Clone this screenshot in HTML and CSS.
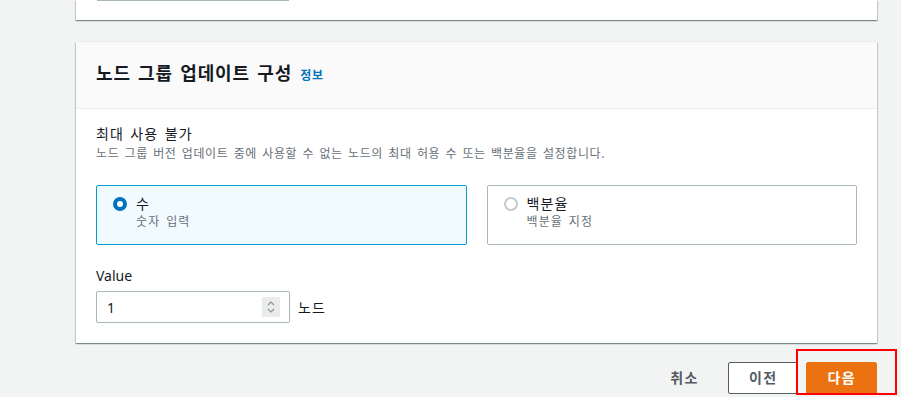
FILE: index.html
```html
<!DOCTYPE html>
<html lang="ko">
<head>
    <meta charset="UTF-8">
    <meta name="viewport" content="width=device-width, initial-scale=1.0">
    <title>노드 그룹 업데이트 구성</title>
    <link rel="stylesheet" href="styles.css">
</head>
<body>
    <div class="page">
        <!-- 이전 섹션 (잘림) -->
        <div class="card card-prev">
            <div class="prev-field"></div>
        </div>

        <!-- 노드 그룹 업데이트 구성 -->
        <div class="card">
            <div class="card-header">
                <h2>노드 그룹 업데이트 구성 <a href="#" class="info">정보</a></h2>
            </div>
            <div class="card-body">
                <div class="field-label">최대 사용 불가</div>
                <div class="field-desc">노드 그룹 버전 업데이트 중에 사용할 수 없는 노드의 최대 허용 수 또는 백분율을 설정합니다.</div>

                <div class="tiles">
                    <label class="tile selected">
                        <span class="radio checked"></span>
                        <span class="tile-text">
                            <span class="tile-title">수</span>
                            <span class="tile-desc">숫자 입력</span>
                        </span>
                    </label>
                    <label class="tile">
                        <span class="radio"></span>
                        <span class="tile-text">
                            <span class="tile-title">백분율</span>
                            <span class="tile-desc">백분율 지정</span>
                        </span>
                    </label>
                </div>

                <div class="value-label">Value</div>
                <div class="value-row">
                    <div class="number-input">
                        <span class="number-value">1</span>
                        <span class="spinner">
                            <svg width="18" height="20" viewBox="0 0 18 20">
                                <path d="M6 8 L9 5 L12 8" fill="none" stroke="#879596" stroke-width="1.2"/>
                                <path d="M6 12 L9 15 L12 12" fill="none" stroke="#879596" stroke-width="1.2"/>
                            </svg>
                        </span>
                    </div>
                    <span class="unit">노드</span>
                </div>
            </div>
        </div>

        <div class="footer">
            <button class="btn btn-link">취소</button>
            <button class="btn btn-normal">이전</button>
            <button class="btn btn-primary">다음</button>
        </div>
    </div>

    <div class="highlight"></div>
</body>
</html>
```

FILE: styles.css
```css
body {
    font-family: 'Noto Sans', 'Noto Sans CJK KR', sans-serif;
    margin: 0;
    background-color: #f2f3f3;
    color: #16191f;
    height: 397px;
    overflow: hidden;
    letter-spacing: 0.07em;
    word-spacing: 0.1em;
}

.page {
    padding: 0 24px 0 76px;
}

.card {
    background: white;
    box-shadow: 0 1px 1px 0 rgba(0,28,36,0.3), 1px 1px 1px 0 rgba(0,28,36,0.15), -1px 1px 1px 0 rgba(0,28,36,0.15), 0 -1px 0 0 #eaeded;
    margin-top: 22px;
}

.card-prev {
    margin-top: 0;
    height: 20px;
}

.prev-field {
    margin-left: 21px;
    width: 192px;
    height: 1px;
    background-color: #aab7b8;
}

.card-header {
    background-color: #fafafa;
    border-bottom: 1px solid #eaeded;
    padding: 19px 20px 23px;
}

h2 {
    display: flex;
    align-items: baseline;
    gap: 8px;
    margin: 0;
    font-size: 18px;
    line-height: 24px;
    font-weight: 700;
    letter-spacing: 0.05em;
}

.info {
    font-size: 12px;
    line-height: 16px;
    font-weight: 700;
    color: #0073bb;
    text-decoration: none;
}

.card-body {
    padding: 14px 20px 20px;
}

.field-label {
    font-size: 14px;
    line-height: 22px;
}

.field-desc {
    margin-top: 1px;
    font-size: 12px;
    line-height: 16px;
    color: #687078;
    letter-spacing: 0.05em;
}

.tiles {
    display: grid;
    grid-template-columns: 1fr 1fr;
    gap: 20px;
    margin-top: 23px;
}

.tile {
    display: flex;
    gap: 9px;
    padding: 8px 16px 14px;
    border: 1px solid #aab7b8;
    border-radius: 2px;
    cursor: pointer;
}

.tile.selected {
    border-color: #00a1c9;
    background-color: #f1faff;
}

.radio {
    flex: none;
    width: 14px;
    height: 14px;
    margin-top: 3px;
    border: 2px solid #c2cacb;
    border-radius: 50%;
    box-sizing: border-box;
    background: white;
}

.radio.checked {
    border: 4.5px solid #0073bb;
}

.tile-text {
    display: flex;
    flex-direction: column;
}

.tile-title {
    font-size: 14px;
    line-height: 20px;
}

.tile-desc {
    font-size: 12px;
    line-height: 16px;
    color: #687078;
}

.value-label {
    margin-top: 20px;
    font-size: 14px;
    line-height: 22px;
    letter-spacing: normal;
}

.value-row {
    display: flex;
    align-items: center;
    gap: 8px;
    margin-top: 4px;
}

.number-input {
    display: flex;
    align-items: center;
    width: 194px;
    height: 32px;
    padding: 0 9px 0 10px;
    border: 1px solid #aab7b8;
    border-radius: 2px;
    box-sizing: border-box;
    font-size: 14px;
    letter-spacing: normal;
}

.number-value {
    flex: 1;
}

.spinner {
    display: flex;
    background-color: #e9ebed;
}

.unit {
    font-size: 14px;
}

.footer {
    display: flex;
    justify-content: flex-end;
    gap: 8px;
    margin-top: 19px;
}

.btn {
    font-family: inherit;
    font-size: 14px;
    font-weight: 700;
    line-height: 22px;
    letter-spacing: 0.1em;
    padding: 4px 20px;
    border: 1px solid transparent;
    border-radius: 2px;
    background: none;
    color: #545b64;
    cursor: pointer;
}

.btn-normal {
    background-color: white;
    border-color: #545b64;
}

.btn-primary {
    background-color: #ec7211;
    border-color: #ec7211;
    color: white;
}

.highlight {
    position: absolute;
    left: 796px;
    top: 349px;
    width: 101px;
    height: 46px;
    border: 2px solid #ff0000;
    box-sizing: border-box;
}
```
